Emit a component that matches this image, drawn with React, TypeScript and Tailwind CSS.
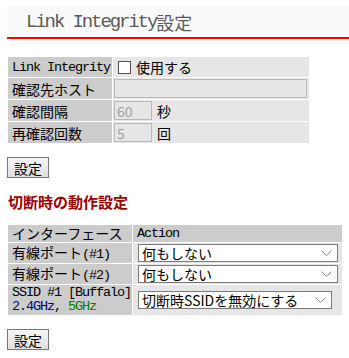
import React from "react";

// Latin runs are drawn in a narrow monospace so they keep the half-width look
const mono = "font-['Liberation_Mono',monospace] text-[13.5px] tracking-[-1.1px]";

function Mono({ children, className = "" }: { children: React.ReactNode; className?: string }) {
  return <span className={`${mono} ${className}`}>{children}</span>;
}

function Chevron() {
  return (
    <svg width="11" height="6" viewBox="0 0 11 6" className="shrink-0">
      <path d="M0.5 0.5 L5.5 5.5 L10.5 0.5" fill="none" stroke="#8a8a8a" strokeWidth="1" />
    </svg>
  );
}

function FakeSelect({ label, width }: { label: string; width: string }) {
  return (
    <div
      className={`flex h-[18px] ${width} items-center justify-between border border-[#7a7a7a] bg-white pl-[3px] pr-[5px] leading-[16px]`}
    >
      <span>{label}</span>
      <Chevron />
    </div>
  );
}

function SubmitButton() {
  return (
    <div className="ml-[7px] flex h-[21px] w-[42px] items-center justify-center border border-[#767676] bg-gradient-to-b from-[#f6f6f6] to-[#dedede] text-[14px] leading-[14px]">
      設定
    </div>
  );
}

// one table cell with a fixed height so mixed fonts cannot stretch the row
function Cell({ h, className, children }: { h: string; className: string; children?: React.ReactNode }) {
  return (
    <td className={`p-0 align-middle ${className}`}>
      <div className={`flex ${h} items-center`}>{children}</div>
    </td>
  );
}

export default function App() {
  const head = "bg-[#cccccc] pl-[4px]";
  const val = "bg-[#e6e6e6]";

  return (
    <div className="h-[358px] w-[349px] overflow-hidden bg-white font-['Noto_Sans_CJK_JP','Noto_Sans',sans-serif] text-[14px] leading-[16px] text-black">
      {/* Title */}
      <div className="ml-[7px] mt-[6px] flex h-[33px] items-center border-b-2 border-[#ff0000] bg-[#fafafa] pl-[19px] text-[#5a5a5a]">
        <span className="font-['Liberation_Mono',monospace] text-[19px] tracking-[-2.1px]">Link Integrity</span>
        <span className="text-[18px]">設定</span>
      </div>

      {/* Settings */}
      <table className="ml-[7px] mt-[17px] border-separate border-spacing-[1px]">
        <tbody>
          <tr>
            <Cell h="h-[20px]" className={`${head} w-[104px]`}>
              <Mono className="pt-[1px]">Link Integrity</Mono>
            </Cell>
            <Cell h="h-[20px]" className={`${val} w-[196px]`}>
              <span className="ml-[5px] h-[13px] w-[13px] border border-[#505050] bg-white" />
              <span className="ml-[5px]">使用する</span>
            </Cell>
          </tr>
          <tr>
            <Cell h="h-[21px]" className={head}>確認先ホスト</Cell>
            <Cell h="h-[21px]" className={val}>
              <div className="ml-[1px] h-[19px] w-[193px] border border-[#b9b9b9] bg-[#e6e6e6]" />
            </Cell>
          </tr>
          <tr>
            <Cell h="h-[21px]" className={head}>確認間隔</Cell>
            <Cell h="h-[21px]" className={val}>
              <div className="ml-[1px] flex h-[19px] w-[38px] items-center border border-[#b9b9b9] pl-[2px] text-[#a0a0a0]">
                60
              </div>
              <span className="ml-[5px]">秒</span>
            </Cell>
          </tr>
          <tr>
            <Cell h="h-[21px]" className={head}>再確認回数</Cell>
            <Cell h="h-[21px]" className={val}>
              <div className="ml-[1px] flex h-[19px] w-[38px] items-center border border-[#b9b9b9] pl-[2px] text-[#a0a0a0]">
                5
              </div>
              <span className="ml-[5px]">回</span>
            </Cell>
          </tr>
        </tbody>
      </table>

      <div className="mt-[13px]">
        <SubmitButton />
      </div>

      {/* On disconnect */}
      <div className="ml-[8px] mt-[16px] text-[15px] font-bold leading-[15px] text-[#990000]">切断時の動作設定</div>

      <table className="ml-[7px] mt-[15px] border-separate border-spacing-[1px]">
        <tbody>
          <tr>
            <Cell h="h-[17px]" className={`${head} w-[124px] leading-[14px]`}>
              <span className="pb-[2px]">インターフェース</span>
            </Cell>
            <Cell h="h-[17px]" className={`${head} w-[209px] leading-[14px]`}>
              <Mono>Action</Mono>
            </Cell>
          </tr>
          <tr>
            <Cell h="h-[20px]" className={head}>
              <span>
                有線ポート<Mono>(#1)</Mono>
              </span>
            </Cell>
            <Cell h="h-[20px]" className={`${val} pl-[5px]`}>
              <FakeSelect label="何もしない" width="w-[200px]" />
            </Cell>
          </tr>
          <tr>
            <Cell h="h-[20px]" className={head}>
              <span>
                有線ポート<Mono>(#2)</Mono>
              </span>
            </Cell>
            <Cell h="h-[20px]" className={`${val} pl-[5px]`}>
              <FakeSelect label="何もしない" width="w-[200px]" />
            </Cell>
          </tr>
          <tr>
            <td className={`${head} p-0 align-middle`}>
              <div className={`${mono} h-[30px] pt-[1px] leading-[14px]`}>
                <div>SSID #1 [Buffalo]</div>
                <div>
                  <span className="text-[#000080]">2.4GHz</span>, <span className="text-[#008000]">5GHz</span>
                </div>
              </div>
            </td>
            <Cell h="h-[30px]" className={`${val} pl-[5px]`}>
              <FakeSelect label="切断時SSIDを無効にする" width="w-[194px]" />
            </Cell>
          </tr>
        </tbody>
      </table>

      <div className="mt-[13px]">
        <SubmitButton />
      </div>
    </div>
  );
}
